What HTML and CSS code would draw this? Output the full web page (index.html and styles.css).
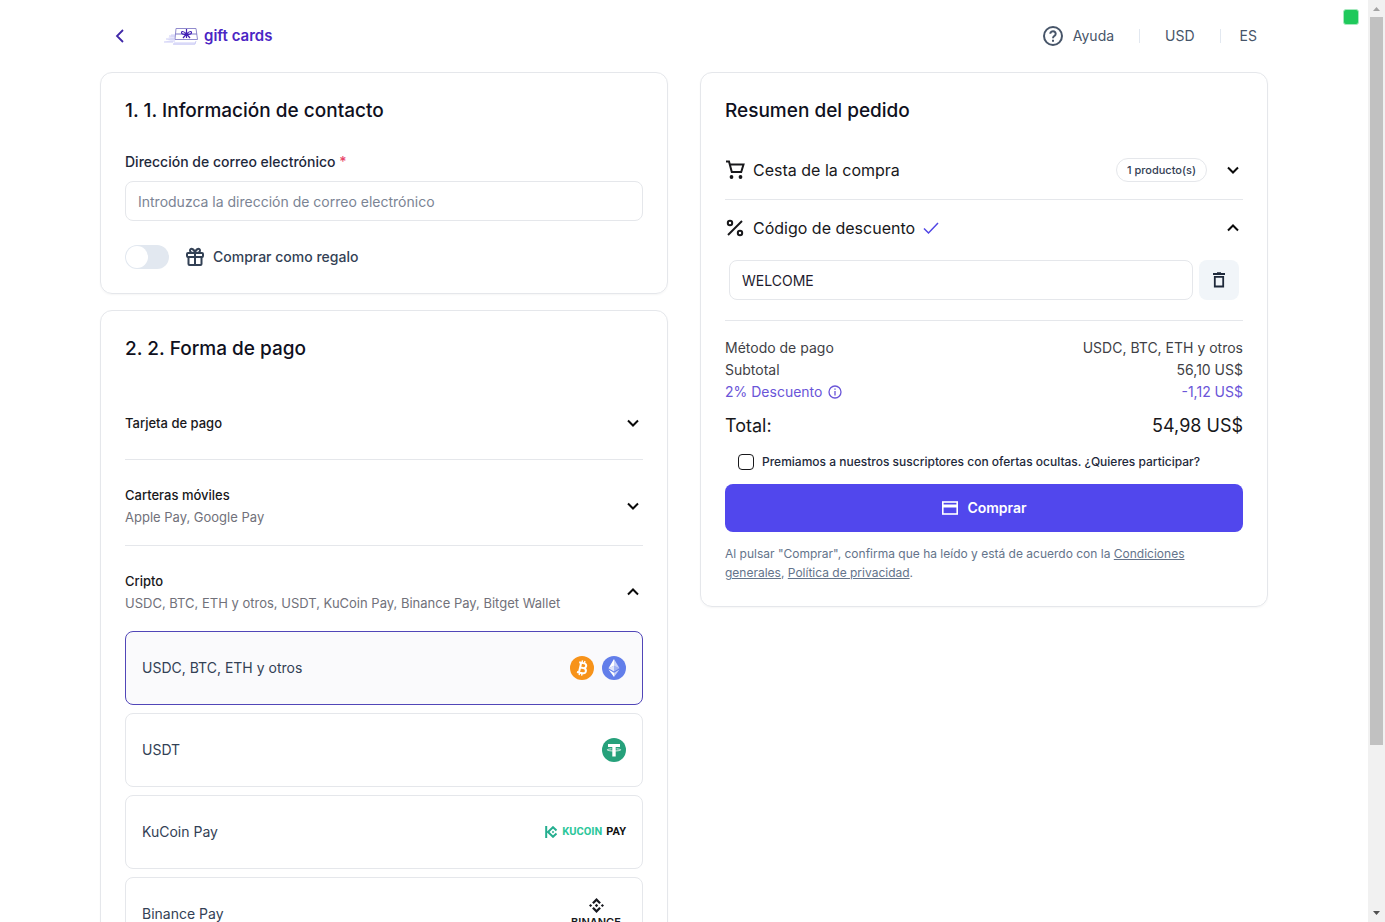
FILE: index.html
```html
<!DOCTYPE html>
<html lang="es">
  <head>
    <meta charset="UTF-8" />
    <meta name="viewport" content="width=device-width, initial-scale=1.0" />
    <title>Gift cards</title>
    <link rel="stylesheet" href="styles.css">
  </head>
  <body>
    <div class="viewport">
      <div class="page">
        <header class="header">
          <a class="back" href="#" aria-label="Volver">
            <svg width="24" height="24" viewBox="0 0 24 24" fill="none" stroke="currentColor" stroke-width="1.800"><path d="M15 6l-6 6 6 6"/></svg>
          </a>
          <a class="logo" href="#">
            <svg width="36" height="20" viewBox="0 0 36 20" fill="none">
              <path d="M7 8h5l-1 8h21l-1 3H9l1-3H0l7-2H3l4-2H4l3-2z" fill="#e6e6fb"/>
              <path d="M2 13h8M0 16h9M5 10h6M9 18h22l1-3" stroke="#ccccf5"/>
              <path d="M12 2.500h20l1.500 11H11z" fill="#fff" stroke="#918bcd"/>
              <path d="M11.500 8h21.500" stroke="#7f79c5"/>
              <path d="M22.500 8c-5-5-6-1-4 0 1 .6 3 .3 4 0 5-5 6-1 4 0-1 .6-3 .3-4 0l-3.500 4M22.500 8l3.500 4M22.500 3v9" stroke="#4321b5" stroke-width="1.200"/>
            </svg>
            <span>gift cards</span>
          </a>
          <nav class="nav">
            <a class="nav-item help" href="#">
              <svg width="24" height="24" viewBox="0 0 24 24" fill="none" stroke="currentColor" stroke-width="2"><circle cx="12" cy="12" r="9"/><path d="M9.300 9.800a2.700 2.500 0 1 1 4.200 2c-1 .7-1.500 1.100-1.500 2.400"/><path d="M12 15.800v2"/></svg>
              Ayuda
            </a>
            <button class="nav-item" type="button">USD</button>
            <button class="nav-item" type="button">ES</button>
          </nav>
        </header>

        <main class="columns">
          <div class="column">
            <section class="card">
              <h2>1. 1. Información de contacto</h2>
              <label class="label" for="email">Dirección de correo electrónico <span class="required">*</span></label>
              <input class="input" id="email" type="email" placeholder="Introduzca la dirección de correo electrónico">
              <div class="gift">
                <input class="switch" id="gift" type="checkbox" role="switch">
                <label class="gift-label" for="gift">
                  <svg width="20" height="20" viewBox="0 0 20 20" fill="none" stroke="currentColor" stroke-width="2"><rect x="2" y="6" width="16" height="4" rx="1"/><path d="M3.500 10v7a1 1 0 0 0 1 1h11a1 1 0 0 0 1-1v-7M10 6v12M10 6C8 6 5 6 5 3.500S9 1 10 6c1-5 5-5 5-2.500S12 6 10 6z"/></svg>
                  Comprar como regalo
                </label>
              </div>
            </section>

            <section class="card">
              <h2>2. 2. Forma de pago</h2>
              <div class="methods">
                <button class="method single" type="button">
                  <span class="method-name">Tarjeta de pago</span>
                  <svg class="chevron" viewBox="0 0 20 20"><path d="M5 7.500l5 5 5-5"/></svg>
                </button>
                <button class="method" type="button">
                  <span>
                    <span class="method-name">Carteras móviles</span>
                    <span class="method-list">Apple Pay, Google Pay</span>
                  </span>
                  <svg class="chevron" viewBox="0 0 20 20"><path d="M5 7.500l5 5 5-5"/></svg>
                </button>
                <button class="method open" type="button">
                  <span>
                    <span class="method-name">Cripto</span>
                    <span class="method-list">USDC, BTC, ETH y otros, USDT, KuCoin Pay, Binance Pay, Bitget Wallet</span>
                  </span>
                  <svg class="chevron" viewBox="0 0 20 20"><path d="M5 12.500l5-5 5 5"/></svg>
                </button>
              </div>
              <div class="options">
                <button class="option selected" type="button">
                  <span>USDC, BTC, ETH y otros</span>
                  <span class="coins">
                    <svg width="24" height="24" viewBox="0 0 24 24"><circle cx="12" cy="12" r="12" fill="#f7931a"/><g transform="rotate(13 12 12)" fill="none" stroke="#fff"><path d="M10 7v10M8 7h5c3.500 0 3.500 4.800 0 4.800h-3h3.500c4 0 4 5.200 0 5.200H8" stroke-width="2"/><path d="M10.800 4.500V7M13.300 4.500V7M10.800 17v2.500M13.300 17v2.500" stroke-width="1.400"/></g></svg>
                    <svg width="24" height="24" viewBox="0 0 24 24" fill="#fff"><circle cx="12" cy="12" r="12" fill="#627eea"/><path d="M12 3l-5.500 9.200L12 9.700z"/><path d="M12 3v6.700l5.500 2.500z" opacity=".65"/><path d="M6.500 12.200L12 9.700v5.800z" opacity=".8"/><path d="M12 9.700l5.500 2.500-5.500 3.300z" opacity=".4"/><path d="M6.500 13.500l5.500 3.200V21z"/><path d="M12 16.700l5.500-3.200L12 21z" opacity=".65"/></svg>
                  </span>
                </button>
                <button class="option" type="button">
                  <span>USDT</span>
                  <svg width="24" height="24" viewBox="0 0 24 24"><circle cx="12" cy="12" r="12" fill="#26a17b"/><path d="M6 6h12v3h-4.300v9.500h-3.400V9H6z" fill="#fff"/><path d="M9.500 10.800c-6 .5-6 2 2.500 2.200 8.500-.2 8.500-1.700 2.500-2.200" fill="none" stroke="#fff" stroke-width=".8"/></svg>
                </button>
                <button class="option" type="button">
                  <span>KuCoin Pay</span>
                  <span class="kucoin">
                    <svg width="13" height="12" viewBox="0 0 13 12" fill="none" stroke="#24ae8f" stroke-width="2"><path d="M1.200 0v12M11.500 4.500L8 1.200 3 6l5 4.800 3.500-3.300"/><path d="M8 4.800L9.200 6 8 7.200 6.800 6z" fill="#24ae8f" stroke="none"/></svg>
                    <span class="kucoin-name">KUCOIN</span>
                    <span>PAY</span>
                  </span>
                </button>
                <button class="option" type="button">
                  <span>Binance Pay</span>
                  <span class="binance">
                    <svg width="15" height="15" viewBox="0 0 16 16" fill="currentColor"><path d="M8 0l4.700 4.700L11 6.400l-3-3-3 3-1.700-1.700zM8 16l-4.700-4.700L5 9.600l3 3 3-3 1.700 1.700zM1.700 6.300L3.400 8 1.700 9.700 0 8zM14.300 6.300L16 8l-1.700 1.700L12.600 8zM8 6.200L9.800 8 8 9.800 6.200 8z"/></svg>
                    <span>BINANCE</span>
                  </span>
                </button>
              </div>
            </section>
          </div>

          <div class="column">
            <section class="card summary">
              <h2>Resumen del pedido</h2>
              <button class="summary-row cart" type="button">
                <svg width="20" height="20" viewBox="0 0 20 20" fill="none" stroke="currentColor" stroke-width="2"><path d="M1 1.500h3L6.800 12h9.400l2.300-7.500H5"/><circle cx="6.500" cy="17" r="1.900" fill="currentColor" stroke="none"/><circle cx="15.500" cy="17" r="1.900" fill="currentColor" stroke="none"/></svg>
                <span>Cesta de la compra</span>
                <span class="badge">1 producto(s)</span>
                <svg class="chevron" viewBox="0 0 20 20"><path d="M5 7.500l5 5 5-5"/></svg>
              </button>
              <button class="summary-row code" type="button">
                <svg width="20" height="20" viewBox="0 0 20 20" fill="none" stroke="currentColor" stroke-width="2"><circle cx="5" cy="5" r="2.200"/><circle cx="15" cy="15" r="2.200"/><path d="M17 3L3 17"/></svg>
                <span>Código de descuento</span>
                <svg width="16" height="16" viewBox="0 0 16 16" fill="none" stroke="#5046e5" stroke-width="1.500"><path d="M1 8.500l4.500 4.500L15 3"/></svg>
                <svg class="chevron" viewBox="0 0 20 20"><path d="M5 12.500l5-5 5 5"/></svg>
              </button>
              <div class="discount">
                <input class="input" type="text" value="WELCOME" aria-label="Código de descuento">
                <button class="remove" type="button" aria-label="Eliminar">
                  <svg width="20" height="20" viewBox="0 0 20 20" fill="none" stroke="currentColor" stroke-width="1.800"><path d="M4 4h12M8 3.200h4M5.800 6.800v9.700h8.400V6.800z"/></svg>
                </button>
              </div>
              <dl class="totals">
                <div><dt>Método de pago</dt><dd>USDC, BTC, ETH y otros</dd></div>
                <div><dt>Subtotal</dt><dd>56,10 US$</dd></div>
                <div class="saving">
                  <dt>2% Descuento
                    <svg width="14" height="14" viewBox="0 0 14 14" fill="none" stroke="currentColor" stroke-width="1.300"><circle cx="7" cy="7" r="6"/><path d="M7 6v4.500M7 3.500v1.300"/></svg>
                  </dt>
                  <dd>-1,12 US$</dd>
                </div>
                <div class="total"><dt>Total:</dt><dd>54,98 US$</dd></div>
              </dl>
              <div class="subscribe">
                <input class="check" id="subscribe" type="checkbox">
                <label for="subscribe">Premiamos a nuestros suscriptores con ofertas ocultas. ¿Quieres participar?</label>
              </div>
              <button class="buy" type="button">
                <svg width="18" height="18" viewBox="0 0 18 18" fill="none" stroke="currentColor"><rect x="1.800" y="3" width="14.400" height="12" stroke-width="1.600"/><path d="M1 7h16" stroke-width="3"/></svg>
                Comprar
              </button>
              <p class="terms">Al pulsar "Comprar", confirma que ha leído y está de acuerdo con la <a href="#">Condiciones generales</a>, <a href="#">Política de privacidad</a>.</p>
            </section>
          </div>
        </main>
        <span class="status"></span>
      </div>

      <div class="scrollbar">
        <svg width="17" height="17" viewBox="0 0 17 17" fill="#a3a3a3"><path d="M5 11l3.500-4 3.500 4z"/></svg>
        <span class="thumb"></span>
        <svg width="17" height="17" viewBox="0 0 17 17" fill="#505050"><path d="M5 6l3.500 4L12 6z"/></svg>
      </div>
    </div>
  </body>
</html>
```

FILE: styles.css
```css
* {
  box-sizing: border-box;
}
body {
  margin: 0;
  font-family: Inter, "Liberation Sans", sans-serif;
  font-size: 14px;
  line-height: 22px;
  color: #1e293b;
  background: #fff;
}
button {
  padding: 0;
  border: 0;
  background: none;
  font: inherit;
  color: inherit;
  text-align: left;
  cursor: pointer;
}
svg {
  display: block;
  flex: none;
}
.viewport {
  display: flex;
  height: 100vh;
  overflow: hidden;
}
.page {
  position: relative;
  flex: 1;
  padding: 0 24px;
  overflow: hidden;
}
.header,
.columns {
  max-width: 1168px;
  margin: 0 auto;
}

/* header */
.header {
  display: flex;
  align-items: center;
  height: 72px;
  padding: 0 11px 0 8px;
}
.back {
  color: #4028a8;
}
.logo {
  display: flex;
  align-items: center;
  gap: 4px;
  margin-left: 32px;
  font-size: 15px;
  line-height: 20px;
  font-weight: 600;
  color: #4b25c4;
  text-decoration: none;
}
.nav {
  display: flex;
  align-items: center;
  margin-left: auto;
}
.nav-item {
  color: #475569;
  text-decoration: none;
}
.nav-item + .nav-item {
  margin-left: 25px;
  padding-left: 26px;
  background: linear-gradient(#e2e8f0, #e2e8f0) left / 1px 14px no-repeat;
}
.nav-item:last-child {
  padding-left: 20px;
}
.help {
  display: flex;
  align-items: center;
  gap: 8px;
}
.status {
  position: absolute;
  top: 9px;
  right: 9px;
  width: 16px;
  height: 16px;
  border: 1px solid #a7e9bf;
  border-radius: 3px;
  background: #1fc95b;
}

/* cards */
.columns {
  display: grid;
  grid-template-columns: 1fr 1fr;
  gap: 32px;
  align-items: start;
}
.column {
  display: grid;
  gap: 16px;
  min-width: 0;
}
.card {
  padding: 24px;
  border: 1px solid #e5e7eb;
  border-radius: 12px;
  box-shadow: 0 1px 2px rgba(0, 0, 0, 0.04);
}
h2 {
  margin: 0 0 24px;
  font-size: 19px;
  line-height: 28px;
  font-weight: 500;
  color: #0f1020;
}
.label {
  display: block;
  margin-bottom: 6px;
  line-height: 26px;
  font-weight: 500;
}
.required {
  color: #e8466a;
}
.input {
  display: block;
  width: 100%;
  height: 40px;
  padding: 0 12px;
  border: 1px solid #e5e7eb;
  border-radius: 8px;
  background: #fff;
  font: inherit;
  color: #1e1b2e;
}
.input::placeholder {
  color: #7b8494;
  opacity: 1;
}
.gift {
  display: flex;
  align-items: center;
  gap: 16px;
  margin-top: 24px;
}
.switch {
  appearance: none;
  width: 44px;
  height: 24px;
  margin: 0;
  padding: 1px;
  border-radius: 12px;
  background: #e2e8f0;
}
.switch::before {
  content: "";
  display: block;
  width: 22px;
  height: 22px;
  border-radius: 50%;
  background: #fff;
}
.switch:checked::before {
  margin-left: auto;
}
.gift-label {
  display: flex;
  align-items: center;
  gap: 8px;
  font-weight: 500;
  color: #334155;
}

/* payment methods */
.chevron {
  width: 20px;
  height: 20px;
  margin-left: auto;
  fill: none;
  stroke: #0a0a0a;
  stroke-width: 2;
}
.method {
  display: flex;
  align-items: center;
  width: 100%;
  padding: 24px 0 17px;
  border-bottom: 1px solid #e5e7eb;
}
.method.single {
  padding: 25px 0;
}
.method.open {
  border-bottom: 0;
}
.method-name,
.method-list {
  display: block;
  font-size: 13px;
}
.method-name {
  font-weight: 500;
  color: #18181b;
}
.method-list {
  color: #71717a;
}
.options {
  display: grid;
  gap: 8px;
}
.option {
  display: flex;
  align-items: center;
  justify-content: space-between;
  height: 74px;
  padding: 0 16px;
  border: 1px solid #e5e7eb;
  border-radius: 8px;
  color: #334155;
}
.option.selected {
  border-color: #5146b8;
  background: #fafafc;
}
.coins {
  display: flex;
  gap: 8px;
}
.kucoin {
  display: flex;
  align-items: center;
  gap: 4px;
  font-family: Roboto, sans-serif;
  font-size: 11px;
  font-weight: 700;
  color: #111;
}
.kucoin-name {
  color: #2cc79b;
}
.binance {
  display: grid;
  justify-items: center;
  width: 60px;
  font-size: 11px;
  line-height: 18px;
  font-weight: 600;
  color: #181a20;
}

/* order summary */
.summary h2 {
  margin-bottom: 16px;
}
.summary-row {
  display: flex;
  align-items: center;
  gap: 8px;
  width: 100%;
  font-size: 16px;
  color: #18181b;
}
.cart {
  height: 59px;
  border-bottom: 1px solid #e5e7eb;
}
.code {
  height: 56px;
}
.badge {
  margin-left: auto;
  padding: 0 10px;
  border: 1px solid #e5e7eb;
  border-radius: 12px;
  font-size: 11px;
  font-weight: 500;
  color: #334155;
}
.badge + .chevron {
  margin-left: 8px;
}
.discount {
  display: flex;
  gap: 6px;
  padding: 4px 4px 20px;
  border-bottom: 1px solid #e5e7eb;
}
.remove {
  display: grid;
  flex: none;
  place-items: center;
  width: 40px;
  height: 40px;
  border-radius: 8px;
  background: #f1f5f9;
}
.totals {
  margin: 16px 0 12px;
  color: #3f3f46;
}
.totals div {
  display: flex;
  justify-content: space-between;
}
.totals dt {
  display: flex;
  align-items: center;
  gap: 6px;
}
.totals dd {
  margin: 0;
}
.totals .saving {
  color: #6a55d8;
}
.totals .total {
  margin-top: 9px;
  font-size: 18px;
  line-height: 28px;
  color: #18181b;
}
.subscribe {
  display: flex;
  align-items: center;
  gap: 8px;
  padding: 0 13px;
  font-size: 12px;
  line-height: 20px;
  font-weight: 500;
}
.check {
  appearance: none;
  width: 16px;
  height: 16px;
  margin: 0;
  border: 1px solid #18181b;
  border-radius: 4px;
}
.check:checked {
  background: #5046e5;
}
.buy {
  display: flex;
  align-items: center;
  justify-content: center;
  gap: 8px;
  width: 100%;
  height: 48px;
  margin: 12px 0;
  border-radius: 8px;
  background: #5147ed;
  font-weight: 600;
  color: #fff;
}
.terms {
  margin: 0;
  font-size: 12px;
  line-height: 19px;
  color: #64748b;
}
.terms a {
  color: inherit;
}

/* scrollbar */
.scrollbar {
  display: flex;
  flex-direction: column;
  width: 17px;
  background: #f1f1f1;
}
.thumb {
  flex: none;
  height: 79%;
  margin: 0 2px auto;
  background: #c1c1c1;
}
```
